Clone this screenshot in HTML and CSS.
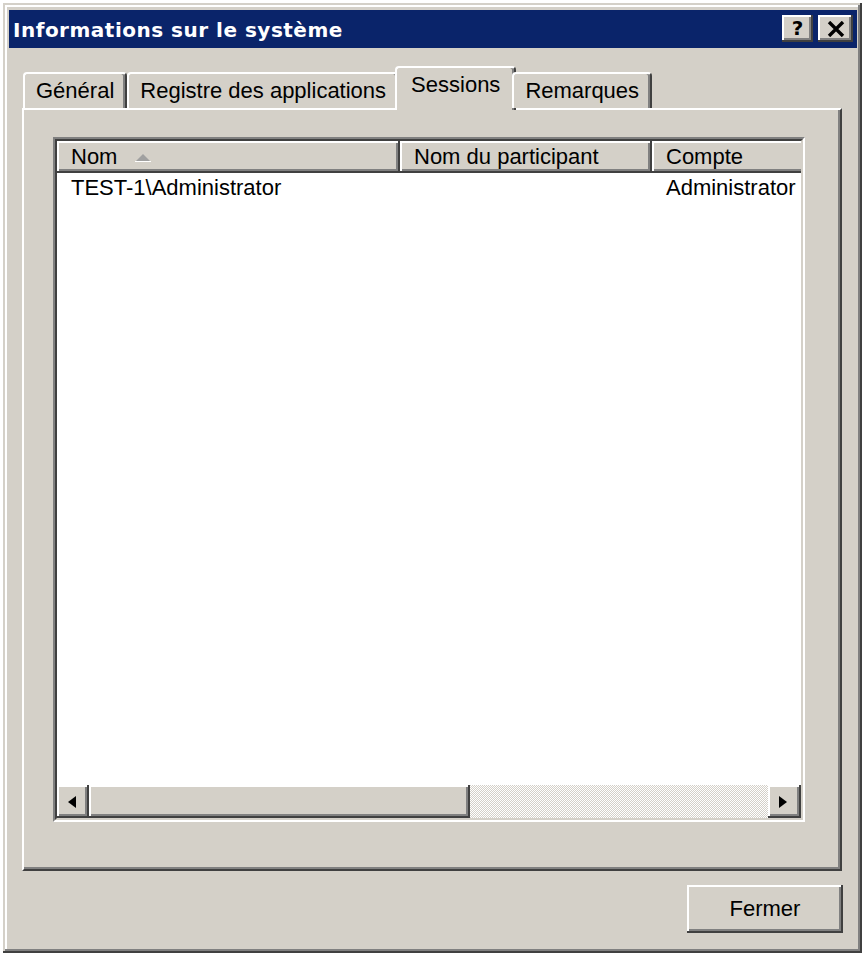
FILE: index.html
```html
<!doctype html>
<html>
    <head>
        <meta charset="utf-8">
        <title>Informations sur le système</title>
        <link rel="stylesheet" href="styles.css">
    </head>
    <body>
    <div class="window">
        <div class="titlebar">
            <span class="title">Informations sur le système</span>
            <div class="caption-btns">
                <span class="cap-btn help">?</span>
                <span class="cap-btn close">
                    <svg width="18" height="16" viewBox="0 0 18 16"><path d="M2 1 L16 15 M16 1 L2 15" stroke="#000" stroke-width="3.4" fill="none"/></svg>
                </span>
            </div>
        </div>

        <div class="body">
            <div class="tabs">
                <div class="tab">Général</div>
                <div class="tab">Registre des applications</div>
                <div class="tab active">Sessions</div>
                <div class="tab">Remarques</div>
            </div>

            <div class="panel">
                <div class="listview">
                    <div class="lv-inner">
                        <div class="lv-header">
                            <div class="hcell">Nom
                                <svg class="sort" width="16" height="8" viewBox="0 0 16 8"><path d="M8 0 L16 8 L0 8 Z" fill="#a0a0a0"/><path d="M0 7.5 L16 7.5" stroke="#fff" stroke-width="1"/></svg>
                            </div>
                            <div class="hcell">Nom du participant</div>
                            <div class="hcell">Compte</div>
                        </div>
                        <div class="lv-body">
                            <div class="lv-row">
                                <div class="cell">TEST-1\Administrator</div>
                                <div class="cell"></div>
                                <div class="cell">Administrator</div>
                            </div>
                        </div>
                        <div class="hscroll">
                            <div class="sb-btn">
                                <svg width="8" height="12" viewBox="0 0 8 12"><path d="M8 0 L0 6 L8 12 Z" fill="#000"/></svg>
                            </div>
                            <div class="sb-thumb"></div>
                            <div class="sb-track"></div>
                            <div class="sb-btn right">
                                <svg width="8" height="12" viewBox="0 0 8 12"><path d="M0 0 L8 6 L0 12 Z" fill="#000"/></svg>
                            </div>
                        </div>
                    </div>
                </div>
            </div>

            <div class="footer">
                <span class="btn">Fermer</span>
            </div>
        </div>
    </div>
    </body>
</html>
```

FILE: styles.css
```css
body { margin:3px; background:#fff; font-family:"Liberation Sans", Arial, sans-serif; font-size:22px; color:#000; }

/* window frame */
.window { width:859px; height:950px; box-sizing:border-box; padding:7px 5px 5px 6px; background:#d4d0c8; display:flex; flex-direction:column;
    box-shadow: inset -2px -2px #404040, inset 2px 2px #d4d0c8, inset -4px -4px #808080, inset 4px 4px #fff; }

.titlebar { height:38px; background:#0a246a; display:flex; align-items:center; justify-content:space-between; padding:0 4px 0 4px; }
.title { font-family:"DejaVu Sans", Verdana, sans-serif; font-weight:bold; font-size:20px; letter-spacing:0.5px; color:#fff; padding-top:2px; }
.caption-btns { display:flex; gap:5px; margin-top:-1px; }
.cap-btn { height:27px; background:#d4d0c8; display:flex; align-items:center; justify-content:center;
    box-shadow: inset -2px -2px #404040, inset 2px 2px #fff, inset -4px -4px #808080; }
.cap-btn.help { width:31px; font-family:"DejaVu Sans", Verdana, sans-serif; font-weight:bold; font-size:20px; line-height:1; padding-bottom:1px; box-sizing:border-box; }
.cap-btn.close { width:35px; }

.body { flex:1; display:flex; flex-direction:column; padding:18px 15px 15px 13px; min-width:0; }

/* tabs */
.tabs { display:flex; align-items:flex-end; padding-left:1px; height:42px; position:relative; z-index:1; }
.tab { height:36px; box-sizing:border-box; padding:0 11px; line-height:34px; background:#d4d0c8; white-space:nowrap;
    border-top:2px solid #fff; border-left:2px solid #fff; border-right:2px solid #404040; border-radius:4px 4px 0 0;
    box-shadow: inset -2px 0 #808080; }
.tab.active { height:44px; margin:0 -4px -2px; padding:0 14px 8px 14px; line-height:34px; }

.panel { flex:1; display:flex; min-width:0; border:2px solid; border-color:#fff #404040 #404040 #fff; box-shadow: inset -2px -2px #808080;
    padding:27px 35px 47px 29px; }

/* list view */
.listview { flex:1; display:flex; min-width:0; border:2px solid; border-color:#808080 #fff #fff #808080; }
.lv-inner { flex:1; display:flex; flex-direction:column; min-width:0; border:2px solid; border-color:#404040 #d4d0c8 #d4d0c8 #404040; overflow:hidden; }
.lv-header, .lv-row { display:grid; grid-template-columns:343px 252px 220px; }
.hcell { height:32px; line-height:31px; padding-left:14px; background:#d4d0c8; white-space:nowrap;
    box-shadow: inset -2px -2px #404040, inset 2px 2px #fff, inset -4px -4px #808080; }
.sort { margin-left:11px; vertical-align:2px; }
.lv-body { flex:1; background:#fff; }
.lv-row { height:30px; line-height:30px; }
.cell { padding-left:14px; white-space:nowrap; }

/* horizontal scrollbar */
.hscroll { height:33px; display:flex; }
.sb-btn, .sb-thumb { background:#d4d0c8; box-shadow: inset -2px -2px #404040, inset 2px 2px #fff, inset -4px -4px #808080; }
.sb-btn { width:32px; flex:none; display:flex; align-items:center; justify-content:center; padding-right:3px; box-sizing:border-box; }
.sb-btn.right { width:33px; padding:0 3px 0 0; }
.sb-thumb { width:381px; flex:none; }
.sb-track { flex:1; background:repeating-conic-gradient(#fff 0 25%, #d4d0c8 0 50%) 0 0 / 2px 2px; }

.footer { display:flex; justify-content:flex-end; padding-top:14px; }
.btn { width:156px; height:48px; line-height:48px; text-align:center; background:#d4d0c8; margin-right:-1px;
    box-shadow: inset -2px -2px #404040, inset 2px 2px #fff, inset -4px -4px #808080; }
```
